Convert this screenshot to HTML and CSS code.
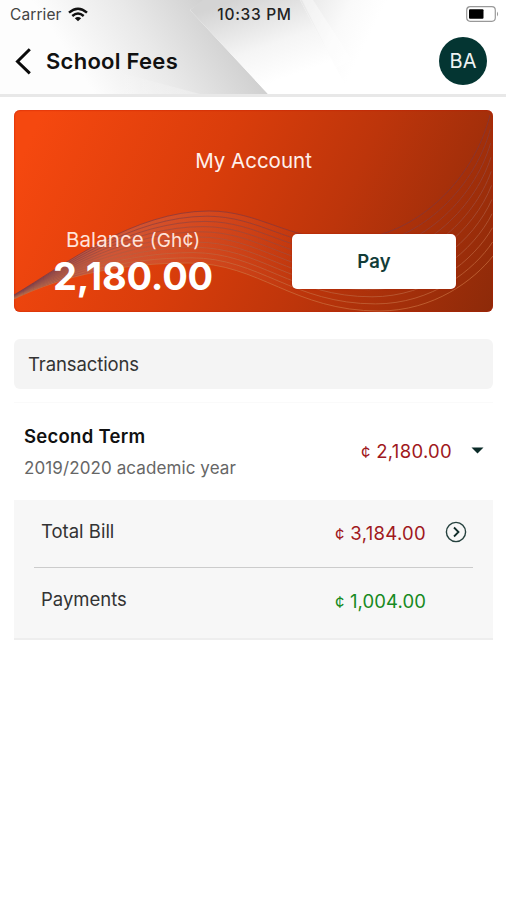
FILE: index.html
```
<!DOCTYPE html>
<html lang="en">
<head>
<meta charset="utf-8">
<title>School Fees</title>
<link rel="stylesheet" href="styles.css">
</head>
<body>
<header class="header">
  <svg class="header-art" viewBox="0 0 506 94" preserveAspectRatio="none" aria-hidden="true">
    <defs>
      <linearGradient id="h1" gradientUnits="userSpaceOnUse" x1="85" y1="80" x2="205" y2="0"><stop offset="0" stop-color="#fdfdfd"/><stop offset=".5" stop-color="#e9e9e9"/><stop offset="1" stop-color="#d0d0d0"/></linearGradient>
      <linearGradient id="h2" gradientUnits="userSpaceOnUse" x1="235" y1="0" x2="265" y2="85"><stop offset="0" stop-color="#d4d4d4"/><stop offset=".6" stop-color="#f5f5f5"/><stop offset="1" stop-color="#fff"/></linearGradient>
      <linearGradient id="h3" gradientUnits="userSpaceOnUse" x1="300" y1="0" x2="370" y2="35"><stop offset="0" stop-color="#e6e6e6"/><stop offset=".6" stop-color="#fafafa"/><stop offset="1" stop-color="#fff"/></linearGradient>
      <linearGradient id="h4" gradientUnits="userSpaceOnUse" x1="110" y1="70" x2="250" y2="80"><stop offset="0" stop-color="#fff" stop-opacity="0"/><stop offset="1" stop-color="#fff" stop-opacity=".45"/></linearGradient>
    </defs>
    <path d="M0 0H205L190 10L268 94H0Z" fill="url(#h1)"/>
    <path d="M110 70L200 94H110Z" fill="url(#h4)"/>
    <path d="M203 0H300L350 94H268L190 10Z" fill="url(#h2)"/>
    <path d="M300 0H506V94H350Z" fill="url(#h3)"/>
    <path d="M302 0H313L352 60L336 68Z" fill="#fff" opacity=".4"/>
  </svg>
  <div class="status">
    <div class="carrier"><span>Carrier</span>
      <svg width="20" height="15" viewBox="0 0 20 15" aria-hidden="true"><g fill="none" stroke="#111" stroke-width="2.4"><path d="M1 5.7Q10-2.3 19 5.7"/><path d="M4.3 9Q10 4 15.7 9"/></g><path d="M6.8 11.3Q10 8.8 13.2 11.3L10 14.3Z" fill="#111"/></svg>
    </div>
    <span class="time">10:33 PM</span>
    <svg class="battery" width="33" height="16" viewBox="0 0 33 16" aria-hidden="true"><rect x=".7" y=".7" width="28.6" height="14.6" rx="3.5" fill="#fff" stroke="#999" stroke-width="1.2"/><rect x="3" y="3.3" width="14.5" height="9.4" rx="1" fill="#000"/><path d="M31 5.5Q33.2 8 31 10.5Z" fill="#999"/></svg>
  </div>
  <div class="titlebar">
    <svg class="back" width="18" height="28" viewBox="0 0 18 28" aria-hidden="true"><path d="M15.8 2.3L3.5 14.5L15.8 26.3" fill="none" stroke="#0a0a0a" stroke-width="3"/></svg>
    <h1 class="title">School Fees</h1>
    <div class="avatar">BA</div>
  </div>
</header>
<main class="main">
  <section class="account">
    <svg class="waves" viewBox="0 0 479 202" aria-hidden="true">
      <defs>
        <linearGradient id="tip" x1="0" x2="1"><stop offset="0" stop-color="#46518a"/><stop offset=".06" stop-color="#745064" stop-opacity=".85"/><stop offset=".25" stop-color="#c06555" stop-opacity=".6"/><stop offset=".5" stop-color="#cc6850" stop-opacity=".3"/><stop offset=".8" stop-color="#cc6850" stop-opacity="0"/></linearGradient>
      </defs>
      <path d="M0 185C50 155 120 101 195 101C245 101 275 130 330 130L365 201C280 201 245 153 175 153C110 153 50 165 0 189Z" fill="url(#tip)"/>
      <g id="strands" fill="none" stroke-width=".9"></g>
    </svg>
    <h2 class="account-title">My Account</h2>
    <div class="account-row">
      <div class="balance">
        <div class="balance-label">Balance <span>(Gh¢)</span></div>
        <div class="balance-value">2,180.00</div>
      </div>
      <button class="pay">Pay</button>
    </div>
  </section>
  <div class="section-label"><span>Transactions</span></div>
  <section class="term">
    <div>
      <div class="term-name"><span>Second Term</span></div>
      <div class="term-year"><span>2019/2020 academic year</span></div>
    </div>
    <div class="amount due"><span class="cedi">¢</span> 2,180.00</div>
    <svg class="caret" width="13" height="7" viewBox="0 0 13 7" aria-hidden="true"><path d="M.5.5H12.5L6.5 6.5Z" fill="#0b2b28"/></svg>
  </section>
  <section class="details">
    <div class="line first">
      <span class="line-name">Total Bill</span>
      <span class="amount due"><span class="cedi">¢</span> 3,184.00</span>
      <svg class="go" width="22" height="22" viewBox="0 0 22 22" aria-hidden="true"><circle cx="11" cy="11" r="9.6" fill="none" stroke="#25413e" stroke-width="1.4"/><path d="M9 6.5L13.5 11L9 15.5" fill="none" stroke="#102c29" stroke-width="1.8"/></svg>
    </div>
    <div class="line second">
      <span class="line-name">Payments</span>
      <span class="amount paid"><span class="cedi">¢</span> 1,004.00</span>
    </div>
  </section>
</main>
<script src="waves.js"></script>
</body>
</html>
```
FILE: styles.css
```
* { box-sizing: border-box; }
body { margin: 0; background: #fff; color: #111; font-family: Inter, "Liberation Sans", sans-serif; }
svg { display: block; flex: none; }
h1, h2 { margin: 0; }
.header { position: relative; height: 97px; border-bottom: 3px solid #e8e8e8; }
.header-art { position: absolute; inset: 0; width: 100%; height: 94px; z-index: -1; }
.status { display: grid; grid-template-columns: 1fr auto 1fr; align-items: center; height: 28px; padding: 0 7px 0 10px; }
.carrier { display: flex; align-items: center; gap: 6px; font-size: 15.5px; letter-spacing: .1px; color: #444; }
.time { font-size: 15.5px; font-weight: 500; letter-spacing: .7px; color: #222; }
.battery { justify-self: end; }
.titlebar { display: flex; align-items: center; height: 66px; padding: 0 19px 0 14px; }
.title { margin-left: 14px; font-size: 22px; font-weight: 600; line-height: 28px; letter-spacing: .27px; }
.avatar { margin-left: auto; width: 48px; height: 48px; border-radius: 50%; background: #043532; color: #eef3f2; font-size: 20px; line-height: 48px; text-align: center; }
.main { padding: 13px 13px 0 14px; }
.account { position: relative; height: 202px; border-radius: 6px; overflow: hidden; background: linear-gradient(115deg, #f5480f 5%, #d93d0b 40%, #bd350b 65%, #8d2a09 100%); box-shadow: inset 0 0 2px #c01800; color: #fff; }
.waves { position: absolute; inset: 0; width: 100%; height: 100%; }
.account-title { position: relative; padding-top: 37px; font-size: 20.5px; font-weight: 400; line-height: 28px; text-align: center; color: #fff1ec; }
.account-row { position: relative; display: flex; justify-content: space-between; padding: 51px 37px 0 39px; }
.balance-label { padding-left: 13px; font-size: 20.5px; line-height: 28px; letter-spacing: .1px; color: #ffe3da; }
.balance-label span { font-size: 19px; letter-spacing: .1px; }
.balance-value { font-size: 38px; font-weight: 700; line-height: 43px; letter-spacing: -.2px; }
.pay { margin-top: 8px; width: 164px; height: 55px; padding: 0 0 2px 0; border: 0; border-radius: 5px; background: #fff; color: #123c38; font: 600 18.5px Inter, sans-serif; letter-spacing: .2px; box-shadow: 0 0 2px #a81b00; }
.section-label { height: 50px; margin-top: 27px; padding-left: 14px; border-radius: 6px; background: #f4f4f4; font-size: 18.5px; line-height: 51px; letter-spacing: -.1px; color: #333; }
.term { display: flex; align-items: center; height: 98px; margin-top: 13px; padding: 0 9px 0 10px; border-top: 1px solid #fafafa; }
.term-name { font-size: 18.5px; font-weight: 600; line-height: 28px; letter-spacing: .27px; }
.term-year { margin-top: 4px; font-size: 17px; line-height: 28px; letter-spacing: .1px; color: #666; }
.term .amount { margin: 0 0 2px auto; }
.caret { margin-left: 19px; margin-bottom: 3px; }
.amount { font-size: 18.5px; letter-spacing: .3px; }
.cedi { font-size: 16.5px; }
.due { color: #a01820; }
.paid { color: #168a22; letter-spacing: .1px; }
.details { height: 140px; padding: 0 20px; background: #f7f7f7; border-bottom: 2px solid #eee; }
.line { display: flex; align-items: center; height: 68px; padding: 0 47px 0 7px; }
.first { padding: 0 6px 4px 7px; border-bottom: 1px solid #ccc; }
.second { padding-bottom: 2px; }
.line-name { margin-bottom: 2px; font-size: 18.5px; color: #333; }
.second .line-name { margin-bottom: 4px; }
.first .amount { margin-top: 2px; }
.line .amount { margin-left: auto; }
.go { margin-left: 19px; }
```
FILE: waves.js
```
const upper = [0, 185, 50, 155, 120, 101, 195, 101, 245, 101, 275, 130, 330, 130, 400, 130, 460, 70, 476, 5];
const lower = [0, 189, 50, 165, 110, 153, 175, 153, 245, 153, 280, 201, 365, 201, 420, 201, 460, 170, 479, 146];
const strands = document.getElementById("strands");
const count = 11;
for (let i = 0; i < count; i++) {
  const t = i / (count - 1);
  const p = upper.map((v, k) => (v + (lower[k] - v) * t).toFixed(1));
  const path = document.createElementNS("http://www.w3.org/2000/svg", "path");
  path.setAttribute("d", `M${p[0]} ${p[1]}C${p.slice(2, 8).join(" ")}C${p.slice(8, 14).join(" ")}C${p.slice(14).join(" ")}`);
  path.setAttribute("stroke", `rgb(${125 + 80 * t}, ${55 + 60 * t}, ${65})`);
  path.setAttribute("opacity", 0.75);
  strands.appendChild(path);
}
```
